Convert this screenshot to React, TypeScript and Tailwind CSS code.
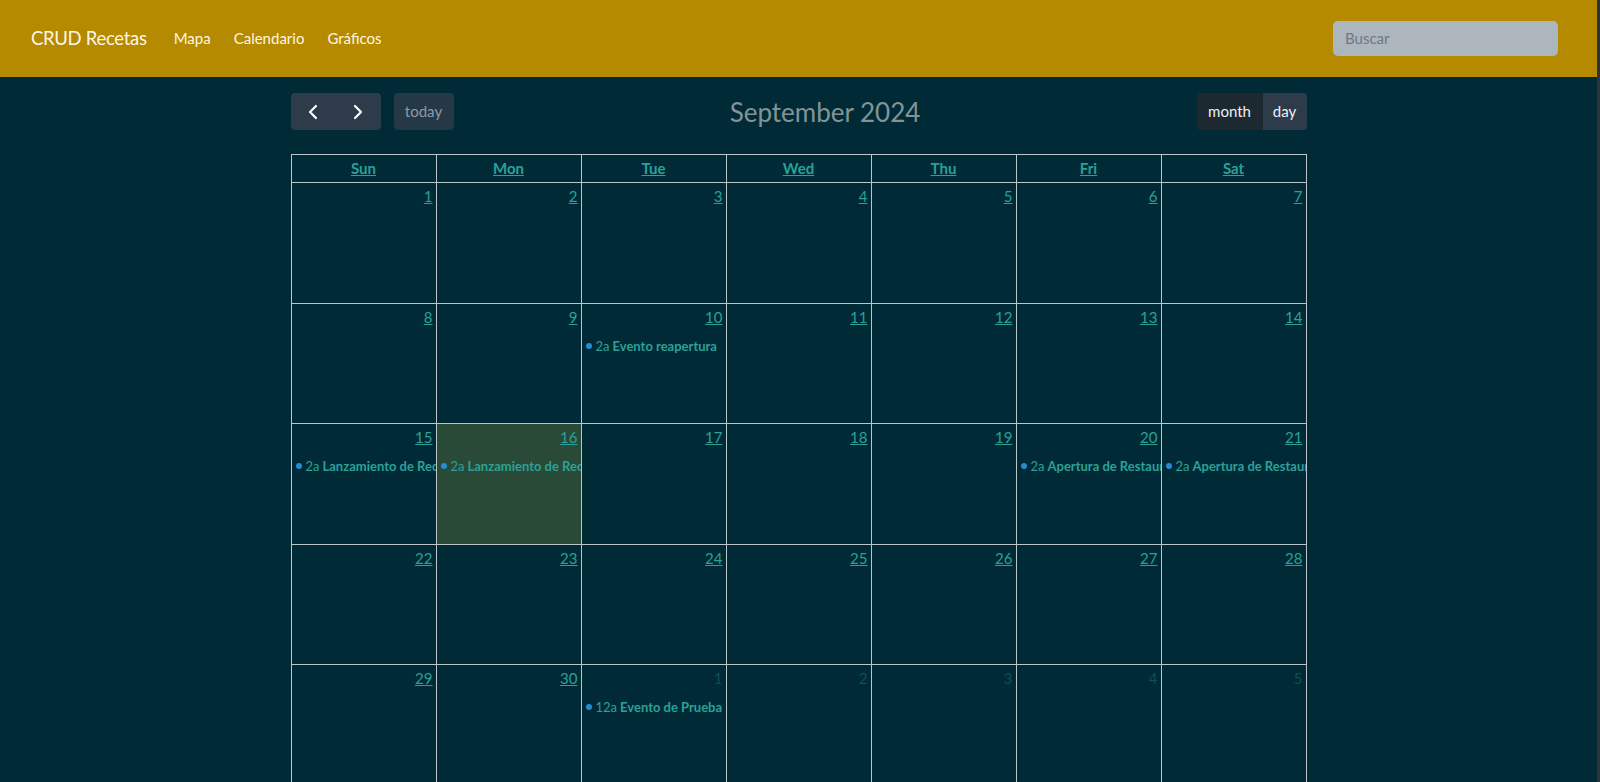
import React from "react";
import { ChevronLeft, ChevronRight } from "lucide-react";

type Ev = { time: string; title: string };
type Day = { n: number; other?: boolean; today?: boolean; events?: Ev[] };

const weeks: Day[][] = [
  [1, 2, 3, 4, 5, 6, 7].map((n) => ({ n })),
  [8, 9, 10, 11, 12, 13, 14].map((n) => ({
    n,
    events: n === 10 ? [{ time: "2a", title: "Evento reapertura" }] : undefined,
  })),
  [15, 16, 17, 18, 19, 20, 21].map((n) => ({
    n,
    today: n === 16,
    events:
      n === 15 || n === 16
        ? [{ time: "2a", title: "Lanzamiento de Recetas" }]
        : n === 20 || n === 21
        ? [{ time: "2a", title: "Apertura de Restaurante" }]
        : undefined,
  })),
  [22, 23, 24, 25, 26, 27, 28].map((n) => ({ n })),
  [
    { n: 29 },
    { n: 30 },
    { n: 1, other: true, events: [{ time: "12a", title: "Evento de Prueba" }] },
    { n: 2, other: true },
    { n: 3, other: true },
    { n: 4, other: true },
    { n: 5, other: true },
  ],
];

const days = ["Sun", "Mon", "Tue", "Wed", "Thu", "Fri", "Sat"];

export default function App() {
  return (
    <div
      className="flex min-h-[782px] bg-[#002b36]"
      style={{ fontFamily: "Lato, 'Liberation Sans', sans-serif" }}
    >
      <div className="flex-1 min-w-0">
        {/* Navbar */}
        <nav className="h-[77px] bg-[#b58900] flex items-center pl-[31px] pr-[39px]">
          <span className="text-[18.5px] tracking-[-0.3px] text-[#fdf6e3] mr-[27px] leading-none">CRUD Recetas</span>
          <div className="flex items-center gap-[23px] text-[15px] text-[#fdf6e3]">
            <span>Mapa</span>
            <span>Calendario</span>
            <span>Gráficos</span>
          </div>
          <div className="flex-1" />
          <div className="w-[225px] h-[35px] rounded-[5px] bg-[#adb5bd] flex items-center px-3 text-[15px] text-[#6c7a87]">
            Buscar
          </div>
        </nav>

        {/* Calendar */}
        <div className="w-[1016px] mx-auto pt-[16px]">
          <div className="flex items-center justify-between mb-[24px] h-[37px]">
            <div className="flex items-center gap-[13px]">
              <div className="flex rounded-[4px] overflow-hidden">
                <div className="w-[45px] h-[37px] bg-[#2d3b4a] flex items-center justify-center text-white">
                  <ChevronLeft size={24} strokeWidth={2.2} />
                </div>
                <div className="w-[45px] h-[37px] bg-[#2d3b4a] flex items-center justify-center text-white">
                  <ChevronRight size={24} strokeWidth={2.2} />
                </div>
              </div>
              <div className="w-[60px] h-[37px] rounded-[4px] bg-[#243846] flex items-center justify-center text-[15px] text-[#8d9ba5]">
                today
              </div>
            </div>
            <div className="text-[26px] text-[#839496] leading-none">September 2024</div>
            <div className="flex rounded-[4px] overflow-hidden text-[15px] text-[#f0f0f0]">
              <div className="w-[66px] h-[37px] bg-[#1c2930] flex items-center justify-center">month</div>
              <div className="w-[44px] h-[37px] bg-[#2d3b4a] flex items-center justify-center">day</div>
            </div>
          </div>

          <table className="w-full border-collapse table-fixed">
            <thead>
              <tr>
                {days.map((d) => (
                  <th
                    key={d}
                    className="h-[28px] border border-[#bcc5c9] text-[15px] font-bold text-[#2aa198] underline p-0"
                  >
                    {d}
                  </th>
                ))}
              </tr>
            </thead>
            <tbody>
              {weeks.map((w, i) => (
                <tr key={i}>
                  {w.map((d, j) => (
                    <td
                      key={j}
                      className={`h-[120px] border border-[#bcc5c9] align-top p-0 ${
                        d.today ? "bg-[#294a36]" : ""
                      }`}
                    >
                      <div className="h-[119.5px] flex flex-col overflow-hidden">
                        <div
                          className={`text-right text-[15px] leading-[20px] pt-[3px] pr-[3px] ${
                            d.other ? "text-[#0e4f55]" : "text-[#2aa198] underline"
                          }`}
                        >
                          {d.n}
                        </div>
                        {d.events?.map((e, k) => (
                          <div
                            key={k}
                            className="mt-[9px] flex items-center whitespace-nowrap overflow-hidden text-[13px] leading-[20px] text-[#2aa198] pl-[4px]"
                          >
                            <span className="inline-block w-[6px] h-[6px] rounded-full bg-[#268bd2] mr-[4px] shrink-0" />
                            <span className="mr-[3px]">{e.time}</span>
                            <span className="font-bold">{e.title}</span>
                          </div>
                        ))}
                      </div>
                    </td>
                  ))}
                </tr>
              ))}
            </tbody>
          </table>
        </div>
      </div>
      <div className="w-[3px] bg-[#2b3535]" />
    </div>
  );
}
